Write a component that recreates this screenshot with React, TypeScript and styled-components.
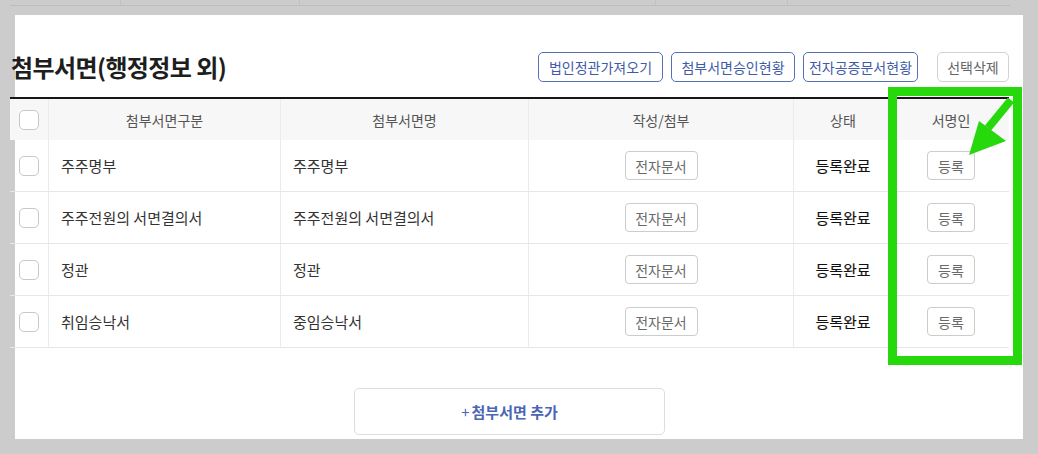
import React from "react";
import styled, { createGlobalStyle } from "styled-components";

const Global = createGlobalStyle`
  html, body { margin: 0; padding: 0; }
  body {
    background: #cccccc;
    font-family: "Noto Sans CJK KR", "Noto Sans", sans-serif;
    width: 1038px;
    height: 454px;
    overflow: hidden;
  }
`;

const Stage = styled.div`
  position: relative;
  width: 1038px;
  height: 454px;
`;

const BackStrip = styled.div`
  margin-left: 10px;
  width: 1000px;
  height: 5px;
  border-bottom: 1px solid #bdbdbd;
  display: grid;
  grid-template-columns: 111px 179px 356px 132px 1fr;
  margin-bottom: 9px;
`;

const BackCell = styled.div`
  border-right: 1px solid #c0c0c0;
  &:last-child { border-right: none; }
`;

const Panel = styled.div`
  margin-left: 15px;
  width: 1008px;
  height: 424px;
  box-sizing: border-box;
  background: #ffffff;
  padding-top: 37px;
`;

const Content = styled.div`
  margin-left: -5px;
  width: 999px;
  display: flex;
  flex-direction: column;
`;

const HeadBar = styled.div`
  display: flex;
  align-items: center;
  justify-content: space-between;
  height: 30px;
  margin-bottom: 15px;
`;

const Title = styled.h2`
  margin: 0 0 0 1px;
  font-size: 24px;
  line-height: 30px;
  font-weight: 700;
  color: #1e1e1e;
  letter-spacing: -0.6px;
`;

const Actions = styled.div`
  display: flex;
  gap: 8px;
`;

const ActionButton = styled.button<{ $muted?: boolean; $w: number }>`
  width: ${(p) => p.$w}px;
  height: 30px;
  box-sizing: border-box;
  border-radius: 5px;
  background: #fff;
  border: 1px solid ${(p) => (p.$muted ? "#d2d2d2" : "#5670b0")};
  color: ${(p) => (p.$muted ? "#666" : "#3f5ca6")};
  margin-left: ${(p) => (p.$muted ? "11px" : "0")};
  font-family: inherit;
  font-size: 14px;
  padding: 0;
  cursor: pointer;
`;

const Table = styled.div`
  border-top: 2px solid #161616;
  display: flex;
  flex-direction: column;
`;

const cols = "39px 232px 248px 265px 99px 116px";

const HeaderRow = styled.div`
  display: grid;
  grid-template-columns: ${cols};
  height: 41px;
  background: #f7f7f7;
`;

const Row = styled.div`
  display: grid;
  grid-template-columns: ${cols};
  height: 52px;
  box-sizing: border-box;
  border-bottom: 1px solid #e6e6e6;
`;

const Cell = styled.div<{ $align?: "left" | "center"; $strong?: boolean }>`
  display: flex;
  align-items: center;
  justify-content: ${(p) => (p.$align === "left" ? "flex-start" : "center")};
  padding-left: ${(p) => (p.$align === "left" ? "12px" : "0")};
  border-right: 1px solid #ebebeb;
  font-size: 15px;
  color: ${(p) => (p.$strong ? "#111" : "#333")};
  -webkit-text-stroke: ${(p) => (p.$strong ? "0.15px #111" : "0")};
  &:last-child { border-right: none; }
`;

const HeadCell = styled(Cell)`
  color: #555;
  font-size: 14px;
`;

const Check = styled.span`
  width: 20px;
  height: 20px;
  box-sizing: border-box;
  border: 1px solid #c8c8c8;
  border-radius: 5px;
  background: #fff;
`;

const SmallButton = styled.button<{ $w: number }>`
  width: ${(p) => p.$w}px;
  height: 29px;
  box-sizing: border-box;
  border: 1px solid #cccccc;
  border-radius: 4px;
  background: #fff;
  color: #6a6a6a;
  font-family: inherit;
  font-size: 14px;
  padding: 0;
`;

const AddButton = styled.button`
  align-self: center;
  margin-top: 40px;
  width: 311px;
  height: 47px;
  box-sizing: border-box;
  border: 1px solid #dddddd;
  border-radius: 5px;
  background: #fff;
  color: #4a66b4;
  font-family: inherit;
  font-size: 15px;
  font-weight: 700;
  padding: 0;
`;

const Plus = styled.span`
  font-weight: 400;
  margin-right: 2px;
`;

const Highlight = styled.div`
  position: absolute;
  left: 888px;
  top: 87px;
  width: 134px;
  height: 278px;
  box-sizing: border-box;
  border: 9px solid #27d90c;
  pointer-events: none;
`;

const ArrowSvg = styled.svg`
  position: absolute;
  left: 960px;
  top: 95px;
  width: 60px;
  height: 70px;
  pointer-events: none;
`;

const rows = [
  ["주주명부", "주주명부"],
  ["주주전원의 서면결의서", "주주전원의 서면결의서"],
  ["정관", "정관"],
  ["취임승낙서", "중임승낙서"],
];

export default function App() {
  return (
    <Stage>
      <Global />
      <BackStrip>
        <BackCell />
        <BackCell />
        <BackCell />
        <BackCell />
        <BackCell />
      </BackStrip>
      <Panel>
        <Content>
          <HeadBar>
            <Title>첨부서면(행정정보 외)</Title>
            <Actions>
              <ActionButton $w={125}>법인정관가져오기</ActionButton>
              <ActionButton $w={124}>첨부서면승인현황</ActionButton>
              <ActionButton $w={115}>전자공증문서현황</ActionButton>
              <ActionButton $w={72} $muted>
                선택삭제
              </ActionButton>
            </Actions>
          </HeadBar>
          <Table>
            <HeaderRow>
              <HeadCell>
                <Check />
              </HeadCell>
              <HeadCell>첨부서면구분</HeadCell>
              <HeadCell>첨부서면명</HeadCell>
              <HeadCell>작성/첨부</HeadCell>
              <HeadCell>상태</HeadCell>
              <HeadCell>서명인</HeadCell>
            </HeaderRow>
            {rows.map(([kind, name], i) => (
              <Row key={i}>
                <Cell>
                  <Check />
                </Cell>
                <Cell $align="left">{kind}</Cell>
                <Cell $align="left">{name}</Cell>
                <Cell>
                  <SmallButton $w={73}>전자문서</SmallButton>
                </Cell>
                <Cell $strong>등록완료</Cell>
                <Cell>
                  <SmallButton $w={48}>등록</SmallButton>
                </Cell>
              </Row>
            ))}
          </Table>
          <AddButton>
            <Plus>+</Plus>첨부서면 추가
          </AddButton>
        </Content>
      </Panel>
      <Highlight />
      <ArrowSvg viewBox="960 95 60 70">
        <line x1="1011" y1="100" x2="988" y2="128" stroke="#27d90c" strokeWidth="8" />
        <polygon points="969,155 979,121 1006,141" fill="#27d90c" />
      </ArrowSvg>
    </Stage>
  );
}
